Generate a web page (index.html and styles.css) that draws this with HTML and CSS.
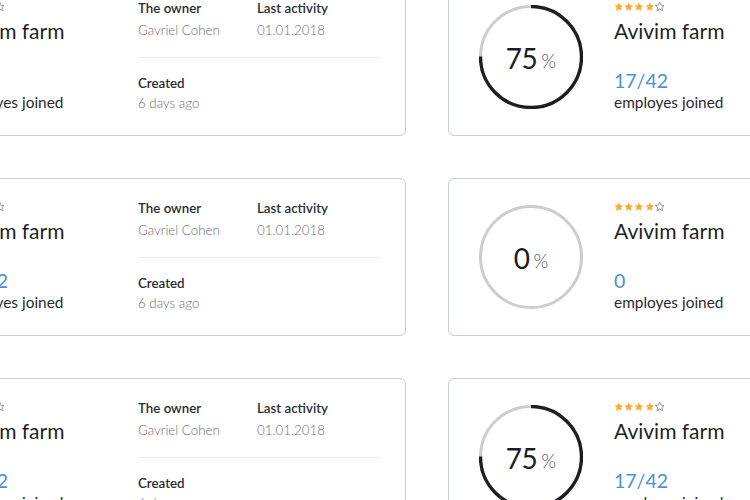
FILE: index.html
```html
<!DOCTYPE html>
<html>
<head>
<meta charset="utf-8">
<link rel="stylesheet" href="styles.css">
</head>
<body>
<svg width="0" height="0" class="defs">
  <defs>
    <path id="star" d="M5 0.4 L6.35 3.3 L9.6 3.65 L7.2 5.85 L7.9 9.1 L5 7.45 L2.1 9.1 L2.8 5.85 L0.4 3.65 L3.65 3.3 Z"/>
  </defs>
</svg>
<div class="grid">
  <!-- row 1 -->
  <div class="card">
    <div class="ring">
      <svg viewBox="0 0 104 104" width="104" height="104"><circle class="track" cx="52" cy="52" r="50.5"/></svg>
      <div class="pct"><span class="num">0</span><span class="sign">%</span></div>
    </div>
    <div class="info">
      <div class="stars"><svg viewBox="0 0 10 10" class="s on"><use href="#star"/></svg><svg viewBox="0 0 10 10" class="s on"><use href="#star"/></svg><svg viewBox="0 0 10 10" class="s on"><use href="#star"/></svg><svg viewBox="0 0 10 10" class="s on"><use href="#star"/></svg><svg viewBox="0 0 10 10" class="s off"><use href="#star"/></svg></div>
      <div class="name">Avivim farm</div>
      <div class="count">0</div>
      <div class="joined">employes joined</div>
    </div>
    <div class="details">
      <div class="drow">
        <div class="cell"><div class="label">The owner</div><div class="value">Gavriel Cohen</div></div>
        <div class="cell"><div class="label">Last activity</div><div class="value">01.01.2018</div></div>
      </div>
      <div class="divider"></div>
      <div class="drow second">
        <div class="cell"><div class="label">Created</div><div class="value">6 days ago</div></div>
      </div>
    </div>
  </div>
  <div class="card">
    <div class="ring">
      <svg viewBox="0 0 104 104" width="104" height="104"><circle class="track" cx="52" cy="52" r="50.5"/><circle class="bar" cx="52" cy="52" r="50.5" style="stroke-dasharray:238 400"/></svg>
      <div class="pct"><span class="num">75</span><span class="sign">%</span></div>
    </div>
    <div class="info">
      <div class="stars"><svg viewBox="0 0 10 10" class="s on"><use href="#star"/></svg><svg viewBox="0 0 10 10" class="s on"><use href="#star"/></svg><svg viewBox="0 0 10 10" class="s on"><use href="#star"/></svg><svg viewBox="0 0 10 10" class="s on"><use href="#star"/></svg><svg viewBox="0 0 10 10" class="s off"><use href="#star"/></svg></div>
      <div class="name">Avivim farm</div>
      <div class="count">17/42</div>
      <div class="joined">employes joined</div>
    </div>
  </div>
  <!-- row 2 -->
  <div class="card">
    <div class="ring">
      <svg viewBox="0 0 104 104" width="104" height="104"><circle class="track" cx="52" cy="52" r="50.5"/><circle class="bar" cx="52" cy="52" r="50.5" style="stroke-dasharray:238 400"/></svg>
      <div class="pct"><span class="num">75</span><span class="sign">%</span></div>
    </div>
    <div class="info">
      <div class="stars"><svg viewBox="0 0 10 10" class="s on"><use href="#star"/></svg><svg viewBox="0 0 10 10" class="s on"><use href="#star"/></svg><svg viewBox="0 0 10 10" class="s on"><use href="#star"/></svg><svg viewBox="0 0 10 10" class="s on"><use href="#star"/></svg><svg viewBox="0 0 10 10" class="s off"><use href="#star"/></svg></div>
      <div class="name">Avivim farm</div>
      <div class="count">17/42</div>
      <div class="joined">employes joined</div>
    </div>
    <div class="details">
      <div class="drow">
        <div class="cell"><div class="label">The owner</div><div class="value">Gavriel Cohen</div></div>
        <div class="cell"><div class="label">Last activity</div><div class="value">01.01.2018</div></div>
      </div>
      <div class="divider"></div>
      <div class="drow second">
        <div class="cell"><div class="label">Created</div><div class="value">6 days ago</div></div>
      </div>
    </div>
  </div>
  <div class="card">
    <div class="ring">
      <svg viewBox="0 0 104 104" width="104" height="104"><circle class="track" cx="52" cy="52" r="50.5"/></svg>
      <div class="pct"><span class="num">0</span><span class="sign">%</span></div>
    </div>
    <div class="info">
      <div class="stars"><svg viewBox="0 0 10 10" class="s on"><use href="#star"/></svg><svg viewBox="0 0 10 10" class="s on"><use href="#star"/></svg><svg viewBox="0 0 10 10" class="s on"><use href="#star"/></svg><svg viewBox="0 0 10 10" class="s on"><use href="#star"/></svg><svg viewBox="0 0 10 10" class="s off"><use href="#star"/></svg></div>
      <div class="name">Avivim farm</div>
      <div class="count">0</div>
      <div class="joined">employes joined</div>
    </div>
  </div>
  <!-- row 3 -->
  <div class="card">
    <div class="ring">
      <svg viewBox="0 0 104 104" width="104" height="104"><circle class="track" cx="52" cy="52" r="50.5"/><circle class="bar" cx="52" cy="52" r="50.5" style="stroke-dasharray:238 400"/></svg>
      <div class="pct"><span class="num">75</span><span class="sign">%</span></div>
    </div>
    <div class="info">
      <div class="stars"><svg viewBox="0 0 10 10" class="s on"><use href="#star"/></svg><svg viewBox="0 0 10 10" class="s on"><use href="#star"/></svg><svg viewBox="0 0 10 10" class="s on"><use href="#star"/></svg><svg viewBox="0 0 10 10" class="s on"><use href="#star"/></svg><svg viewBox="0 0 10 10" class="s off"><use href="#star"/></svg></div>
      <div class="name">Avivim farm</div>
      <div class="count">17/42</div>
      <div class="joined">employes joined</div>
    </div>
    <div class="details">
      <div class="drow">
        <div class="cell"><div class="label">The owner</div><div class="value">Gavriel Cohen</div></div>
        <div class="cell"><div class="label">Last activity</div><div class="value">01.01.2018</div></div>
      </div>
      <div class="divider"></div>
      <div class="drow second">
        <div class="cell"><div class="label">Created</div><div class="value">6 days ago</div></div>
      </div>
    </div>
  </div>
  <div class="card">
    <div class="ring">
      <svg viewBox="0 0 104 104" width="104" height="104"><circle class="track" cx="52" cy="52" r="50.5"/><circle class="bar" cx="52" cy="52" r="50.5" style="stroke-dasharray:238 400"/></svg>
      <div class="pct"><span class="num">75</span><span class="sign">%</span></div>
    </div>
    <div class="info">
      <div class="stars"><svg viewBox="0 0 10 10" class="s on"><use href="#star"/></svg><svg viewBox="0 0 10 10" class="s on"><use href="#star"/></svg><svg viewBox="0 0 10 10" class="s on"><use href="#star"/></svg><svg viewBox="0 0 10 10" class="s on"><use href="#star"/></svg><svg viewBox="0 0 10 10" class="s off"><use href="#star"/></svg></div>
      <div class="name">Avivim farm</div>
      <div class="count">17/42</div>
      <div class="joined">employes joined</div>
    </div>
  </div>
</div>
</body>
</html>
```
FILE: styles.css
```css
html, body {
  margin: 0;
  padding: 0;
  background: #ffffff;
  overflow: hidden;
  width: 750px;
  height: 500px;
}
body {
  font-family: Lato, "Noto Sans", sans-serif;
  color: #222228;
}
.defs {
  position: absolute;
  width: 0;
  height: 0;
}
.grid {
  display: grid;
  grid-template-columns: 618px 618px;
  column-gap: 42px;
  row-gap: 42px;
  margin-left: -212px;
  margin-top: -22px;
}
.card {
  box-sizing: border-box;
  height: 158px;
  border: 1px solid #c9ccd9;
  border-radius: 6px;
  display: flex;
  align-items: flex-start;
  padding-left: 30px;
  background: #fff;
}
.ring {
  position: relative;
  width: 104px;
  height: 104px;
  flex: 0 0 104px;
  align-self: center;
}
.ring svg {
  display: block;
}
.ring .track {
  fill: none;
  stroke: #cdcdd1;
  stroke-width: 3;
}
.ring .bar {
  fill: none;
  stroke: #1d1d24;
  stroke-width: 3.4;
  transform: rotate(-90deg);
  transform-origin: 52px 52px;
}
.pct {
  position: absolute;
  inset: 0;
  display: flex;
  align-items: center;
  justify-content: center;
  padding-top: 2px;
}
.num {
  font-size: 28px;
  color: #1d1d24;
  letter-spacing: -0.5px;
}
.sign {
  font-size: 19px;
  color: #56565c;
  margin-left: 4px;
  margin-top: 5px;
  font-weight: 300;
}
.info {
  margin-left: 31px;
  width: 184px;
  flex: 0 0 184px;
  padding-top: 23px;
}
.stars {
  display: flex;
  gap: 0.6px;
  height: 10px;
}
.s {
  width: 9.6px;
  height: 9.6px;
}
.s.on {
  fill: #f6ad2b;
}
.s.off {
  fill: none;
  stroke: #7a7a80;
  stroke-width: 0.8;
}
.name {
  font-size: 21px;
  line-height: 26px;
  margin-top: 6px;
  color: #1f1f26;
}
.count {
  font-size: 19.5px;
  line-height: 19px;
  margin-top: 27px;
  color: #4a8fdc;
}
.joined {
  font-size: 15.4px;
  line-height: 20px;
  margin-top: 2px;
  color: #2a2a30;
}
.details {
  width: 242px;
  flex: 0 0 242px;
  padding-top: 20px;
}
.drow {
  display: flex;
}
.cell {
  width: 119px;
}
.label {
  font-size: 13.3px;
  line-height: 18px;
  font-weight: 600;
  color: #2b2b31;
}
.value {
  font-size: 13.3px;
  line-height: 18px;
  font-weight: 300;
  color: #6e6e74;
  margin-top: 4px;
}
.second .value {
  margin-top: 2px;
}
.divider {
  height: 1px;
  background: #ececee;
  margin-top: 18px;
  margin-bottom: 16px;
}
```
